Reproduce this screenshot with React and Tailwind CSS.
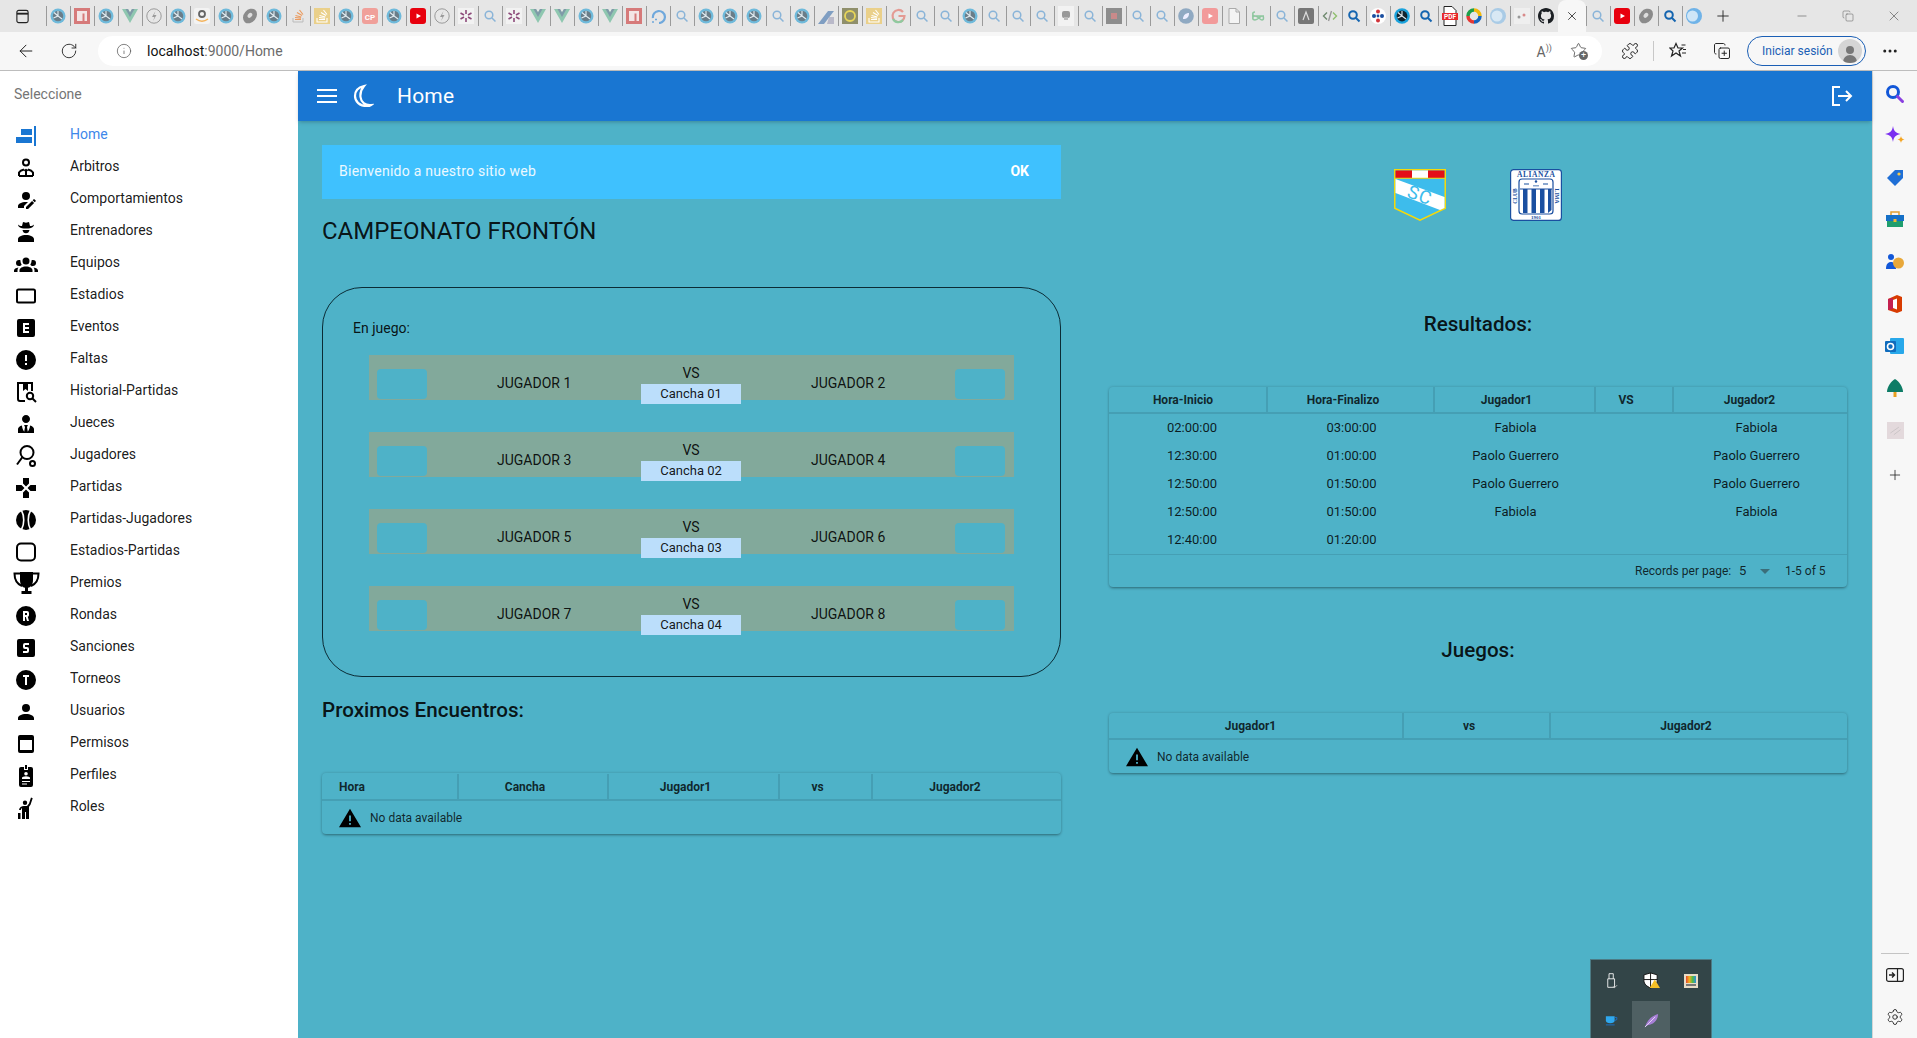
import React from "react";
import { ArrowLeft, RotateCw, Info, Plus, Minus, X, Copy, Settings, Puzzle, CopyPlus, Star, MoreHorizontal } from "lucide-react";

const P = ({ d, className = "" }) => (
  <svg viewBox="0 0 24 24" className={`w-6 h-6 ${className}`} fill="currentColor"><path fillRule="evenodd" d={d} /></svg>
);
const S = ({ children, className = "w-6 h-6" }) => (
  <svg viewBox="0 0 24 24" className={className} fill="none" stroke="currentColor" strokeWidth="2">{children}</svg>
);
const C = "M12,2A10,10 0 0,1 22,12A10,10 0 0,1 12,22A10,10 0 0,1 2,12A10,10 0 0,1 12,2Z";
const B = "M5,3H19A2,2 0 0,1 21,5V19A2,2 0 0,1 19,21H5A2,2 0 0,1 3,19V5A2,2 0 0,1 5,3Z";

const navItems = [
  ["Home", <P className="text-[#1976d2]" d="M20 2H22V22H20V2ZM7 5H18V11H7V5ZM2 13H18V19H2V13Z" />],
  ["Arbitros", <S><circle cx="12" cy="6.500" r="3" /><path d="M10.500 13.500 12 15l1.500-1.500M12 15v5M5 20v-3.500c1-1.500 3-2.500 5-3M19 20v-3.500c-1-1.500-3-2.500-5-3M5 20h14" /></S>],
  ["Comportamientos", <P d="M21.7,13.35L20.7,14.35L18.65,12.3L19.65,11.3C19.86,11.09 20.21,11.09 20.42,11.3L21.7,12.58C21.91,12.79 21.91,13.14 21.7,13.35M12,18.94L18.06,12.88L20.11,14.93L14.06,21H12V18.94M12,14C7.58,14 4,15.79 4,18V20H10V18.11L14,14.11C13.34,14.03 12.67,14 12,14M12,4A4,4 0 0,0 8,8A4,4 0 0,0 12,12A4,4 0 0,0 16,8A4,4 0 0,0 12,4Z" />],
  ["Entrenadores", <P d="M9 2l3 .8L15 2l1 4c1.500 0 3-.5 4-1.500 0 2-2 3.500-4 3.700-1 .2-2.500 .3-4 .3s-3-.1-4-.3C6 8 4 6.500 4 4.500 5 5.500 6.500 6 8 6L9 2ZM8.500 10h7c-.3 2-1.600 3.300-3.500 3.300S8.800 12 8.500 10ZM12 15c4.400 0 8 1.800 8 4v3H4v-3c0-2.200 3.600-4 8-4Z" />],
  ["Equipos", <P d="M12,5.5A3.5,3.5 0 0,1 15.5,9A3.5,3.5 0 0,1 12,12.5A3.5,3.5 0 0,1 8.5,9A3.5,3.5 0 0,1 12,5.5M5,8C5.56,8 6.08,8.15 6.53,8.42C6.38,9.85 6.8,11.27 7.66,12.38C7.16,13.34 6.16,14 5,14A3,3 0 0,1 2,11A3,3 0 0,1 5,8M19,8A3,3 0 0,1 22,11A3,3 0 0,1 19,14C17.84,14 16.84,13.34 16.34,12.38C17.2,11.27 17.62,9.85 17.47,8.42C17.92,8.15 18.44,8 19,8M5.5,18.25C5.5,16.18 8.41,14.5 12,14.5C15.59,14.5 18.5,16.18 18.5,18.25V20H5.5V18.25M0,20V18.5C0,17.11 1.89,15.94 4.45,15.6C3.86,16.28 3.5,17.22 3.5,18.25V20H0M24,20H20.5V18.25C20.5,17.22 20.14,16.28 19.55,15.6C22.11,15.94 24,17.11 24,18.5V20Z" />],
  ["Estadios", <S><rect x="3" y="5.500" width="18" height="13" rx="1.500" /></S>],
  ["Eventos", <P d={"M9,7V17H15V15H11V13H15V11H11V9H15V7H9Z" + B} />],
  ["Faltas", <P d={"M13,13H11V7H13V13ZM13,17H11V15H13V17Z" + C} />],
  ["Historial-Partidas", <S><path d="M11 21H6a2 2 0 0 1-2-2V3h14v8" /><path d="M9 3v8l2.500-2 2.500 2V3" fill="currentColor" stroke="none" /><circle cx="16" cy="16" r="3.200" /><path d="M18.500 18.500 22 22" /></S>],
  ["Jueces", <P d="M12 3C14.21 3 16 4.79 16 7S14.21 11 12 11 8 9.21 8 7 9.79 3 12 3M16 13.54C16 14.6 15.72 17.07 13.81 19.83L13 15L13.94 13.12C13.32 13.05 12.67 13 12 13S10.68 13.05 10.06 13.12L11 15L10.19 19.83C8.28 17.07 8 14.6 8 13.54C5.61 14.24 4 15.5 4 17V21H20V17C20 15.5 18.4 14.24 16 13.54Z" />],
  ["Jugadores", <S><ellipse cx="13" cy="8.500" rx="6.500" ry="6.500" /><path d="M8.500 13 3 20.500" /><circle cx="18.500" cy="19.500" r="2.500" /></S>],
  ["Partidas", <P d="M16.5,9L13.5,12L16.5,15H22V9H16.5ZM9,16.5V22H15V16.5L12,13.5L9,16.5ZM7.5,9H2V15H7.5L10.5,12L7.5,9ZM15,7.5V2H9V7.5L12,10.5L15,7.5Z" />],
  ["Partidas-Jugadores", <svg viewBox="0 0 24 24" className="w-6 h-6"><circle cx="12" cy="12" r="10" fill="currentColor" /><path d="M7.500 2.500c3 5.500 3 13.500 0 19M16.500 2.500c-3 5.500-3 13.500 0 19" fill="none" stroke="#fff" strokeWidth="1.600" /></svg>],
  ["Estadios-Partidas", <S><rect x="3" y="3.500" width="18" height="17" rx="4" /></S>],
  ["Premios", <svg viewBox="0 0 27 26" className="w-[27px] h-[26px] overflow-visible" fill="currentColor"><path d="M7 1h13v8c0 5-2.500 8-6.500 8S7 14 7 9ZM12 16h3v4h-3ZM8.500 20h10v3h-10Z" /><path d="M7 2.500H1.500C1.500 9 4 13 9 15M20 2.500h5.500C25.500 9 23 13 18 15" fill="none" stroke="currentColor" strokeWidth="2" /></svg>],
  ["Rondas", <P d={"M9,7V17H11V13H11.8L13,17H15L13.76,12.85C14.5,12.55 15,11.84 15,11V9A2,2 0 0,0 13,7H9ZM11,9H13V11H11V9Z" + C} />],
  ["Sanciones", <P d={"M11,7A2,2 0 0,0 9,9V11A2,2 0 0,0 11,13H13V15H9V17H13A2,2 0 0,0 15,15V13A2,2 0 0,0 13,11H11V9H15V7H11Z" + B} />],
  ["Torneos", <P d={"M9,7V9H11V17H13V9H15V7H9Z" + C} />],
  ["Usuarios", <P d="M12,4A4,4 0 0,1 16,8A4,4 0 0,1 12,12A4,4 0 0,1 8,8A4,4 0 0,1 12,4M12,14C16.42,14 20,15.79 20,18V20H4V18C4,15.79 7.58,14 12,14Z" />],
  ["Permisos", <P d="M6 3H18A2 2 0 0 1 20 5V19A2 2 0 0 1 18 21H6A2 2 0 0 1 4 19V5A2 2 0 0 1 6 3ZM6 8V18H18V8H6Z" />],
  ["Perfiles", <P d="M11 1h2v4h-2V1ZM7 3h3v3h4V3h3a2 2 0 0 1 2 2v16a2 2 0 0 1-2 2H7a2 2 0 0 1-2-2V5a2 2 0 0 1 2-2ZM12 8a1.800 1.800 0 1 0 0 3.600A1.800 1.800 0 0 0 12 8ZM8 15h8v-1.200c0-.8-1.800-1.600-4-1.600s-4 .8-4 1.600V15ZM8 17v1h8v-1H8ZM8 19.500v1h5v-1H8Z" />],
  ["Roles", <P d="M11 4.500a2.200 2.200 0 1 1 0 4.400 2.200 2.200 0 0 1 0-4.400ZM17 1.500l1.700.8-2.200 6.500-1.500 2V23h-3v-7h-1v7H8V12c-.6.4-1 1-1.200 2H5c.3-2.600 2.500-4 5-4h3l2-2.500L17 1.500ZM4 17h2.500v6H4v-6Z" />],
];

function Fav({ k }) {
  const cls = "w-4 h-4";
  switch (k) {
    case "sw": return <svg viewBox="0 0 16 16" className={cls}><circle cx="8" cy="8" r="7.500" fill="#6fbadb" /><circle cx="8" cy="8" r="5.200" fill="#6a7d88" /><path d="M8 3v5l4 3M8 8l-4.500 2M8 8 4 4.500" stroke="#e4eef3" strokeWidth="1.100" fill="none" /></svg>;
    case "n": return <svg viewBox="0 0 16 16" className={cls}><rect width="16" height="16" fill="#d67a7a" /><path d="M3 13V3h10v10h-2.500V5.500h-2V13Z" fill="#f3e5e5" /></svg>;
    case "vue": return <svg viewBox="0 0 16 16" className={cls}><path d="M0 1h6l2 3.500L10 1h6L8 15Z" fill="#8fc7b0" /><path d="M3.500 1H6l2 3.500L10 1h2.500L8 9Z" fill="#7f9aa8" /></svg>;
    case "bolt": return <svg viewBox="0 0 16 16" className={cls} fill="none"><circle cx="8" cy="8" r="7.200" stroke="#9a9a9a" /><path d="M9.500 3 6 9h2.500L7 13l3.500-6H8Z" fill="#9a9a9a" /></svg>;
    case "amz": return <svg viewBox="0 0 16 16" className={cls}><rect width="16" height="16" rx="2" fill="#f3f3f3" /><circle cx="8" cy="6" r="3" fill="none" stroke="#666" strokeWidth="1.800" /><path d="M2 11c4 3 8 3 12 0" stroke="#f4b35a" strokeWidth="1.500" fill="none" /></svg>;
    case "disc": return <svg viewBox="0 0 16 16" className={cls}><ellipse cx="8" cy="8" rx="8" ry="6.200" transform="rotate(-50 8 8)" fill="#8b8b8b" /><ellipse cx="8.500" cy="7.500" rx="2.800" ry="2" transform="rotate(-50 8 8)" fill="#ddd" /></svg>;
    case "so1": return <svg viewBox="0 0 16 16" className={cls} fill="none"><path d="M3 10v4h10v-4" stroke="#bbb" /><path d="M5 11.500h6M5 9.500l6 .7M5.500 7.500l5.800 1.500M7 4.500l5 3M9.500 2l3.500 4.500" stroke="#eb9b5f" strokeWidth="1.200" /></svg>;
    case "so2": return <svg viewBox="0 0 16 16" className={cls}><rect width="16" height="16" fill="#ead08a" /><path d="M3 10v4h10v-4M5 11.500h6M5 9.500l6 .7M5.500 7.500l5.800 1.500M7 4.500l5 3M9.500 2l3.500 4.500" stroke="#fff" fill="none" strokeWidth="1.100" /></svg>;
    case "cp": return <svg viewBox="0 0 16 16" className={cls}><rect width="16" height="16" rx="3" fill="#f0a09a" /><text x="8" y="11.500" fontSize="8" fontWeight="700" textAnchor="middle" fill="#fff" fontFamily="Roboto, sans-serif">CP</text></svg>;
    case "yt": return <svg viewBox="0 0 16 16" className={cls}><rect width="16" height="16" rx="3" fill="#e8000d" /><path d="M6.500 5.500v5L11 8Z" fill="#fff" /></svg>;
    case "yt2": return <svg viewBox="0 0 16 16" className={cls}><rect width="16" height="16" rx="3" fill="#f29a9a" /><path d="M6.500 5.500v5L11 8Z" fill="#fff" /></svg>;
    case "ast": return <svg viewBox="0 0 16 16" className={cls}><rect width="16" height="16" fill="#f2f2f2" /><path d="M8 2v4M8 10v4M2.500 5l3.500 2M10 9l3.500 2M2.500 11 6 9M10 7l3.500-2" stroke="#8d4a7a" strokeWidth="1.600" /></svg>;
    case "s": return <svg viewBox="0 0 16 16" className={cls} fill="none"><circle cx="7" cy="7" r="3.800" stroke="#8ab4d8" strokeWidth="1.500" /><path d="m10 10 3.500 3.500" stroke="#8ab4d8" strokeWidth="1.500" /></svg>;
    case "sd": return <svg viewBox="0 0 16 16" className={cls} fill="none"><circle cx="7" cy="7" r="3.800" stroke="#1565b0" strokeWidth="2" /><path d="m10 10 3.500 3.500" stroke="#1565b0" strokeWidth="2" /></svg>;
    case "spin": return <svg viewBox="0 0 16 16" className={cls} fill="none"><path d="M3 10a6 6 0 1 1 6 5" stroke="#6fa8dc" strokeWidth="2.200" /><path d="M2 14h2M5 11.500h2" stroke="#6fa8dc" strokeWidth="1.500" /></svg>;
    case "diag": return <svg viewBox="0 0 16 16" className={cls}><path d="M0 16 10 3h6L6 16Z" fill="#7f9ec2" /><path d="M11 9h5v7h-7Z" fill="#b9b9c9" /></svg>;
    case "oli": return <svg viewBox="0 0 16 16" className={cls}><rect width="16" height="16" fill="#8f8f6b" /><circle cx="8" cy="8" r="5" fill="none" stroke="#e8d65a" strokeWidth="1.800" /></svg>;
    case "g": return <svg viewBox="0 0 16 16" className={cls} fill="none"><path d="M13 4a6 6 0 1 0 1.500 4H8.500" stroke="#e49a93" strokeWidth="2.200" /><path d="M3 11a6 6 0 0 0 10 1" stroke="#8fca9f" strokeWidth="2.200" /></svg>;
    case "skull": return <svg viewBox="0 0 16 20" className="w-4 h-5"><rect width="16" height="20" fill="#f2f2f2" /><rect x="4" y="5" width="8" height="7" rx="2" fill="#999" /><rect x="6" y="11" width="4" height="3" fill="#bbb" /></svg>;
    case "dk": return <svg viewBox="0 0 16 16" className={cls}><rect width="16" height="16" fill="#8d8d8d" /><rect x="5" y="5" width="6" height="6" fill="#c98a8a" /></svg>;
    case "leaf": return <svg viewBox="0 0 16 16" className={cls}><circle cx="8" cy="8" r="7.800" fill="#8fa9c2" /><path d="M5 11c0-4 3-6 6-6 0 4-2 6-6 6Z" fill="#eef" /></svg>;
    case "doc": return <svg viewBox="0 0 16 16" className={cls} fill="none"><path d="M3 .5h7l3.500 3.500v11.500H3Z" stroke="#aaa" fill="#f4f4f4" /><path d="M10 .5V4h3.500" stroke="#aaa" /></svg>;
    case "gg": return <svg viewBox="0 0 16 16" className={cls} fill="none" stroke="#8fc79f" strokeWidth="1.500"><path d="M2 8h12M5 4c-3 0-3 4 0 4s5 4 7 4 2-4 0-4-4 4-7 4-3-4 0-4" /></svg>;
    case "a": return <svg viewBox="0 0 16 16" className={cls}><rect width="16" height="16" rx="2" fill="#777" /><path d="M5 12 8 4l3 8" stroke="#ddd" strokeWidth="1.200" fill="none" /></svg>;
    case "code": return <svg viewBox="0 0 16 16" className={cls} fill="none" strokeWidth="1.400"><path d="M5 4.500 1.500 8 5 11.500" stroke="#6f8a6f" /><path d="M11 4.500 14.500 8 11 11.500" stroke="#8fbf6f" /><path d="M9.500 3 6.500 13" stroke="#999" /></svg>;
    case "dots": return <svg viewBox="0 0 16 16" className={cls}><circle cx="8" cy="8" r="8" fill="#fff" /><circle cx="8" cy="3.500" r="2" fill="#d0343a" /><circle cx="4" cy="8" r="2" fill="#1a4fa0" /><circle cx="12" cy="8" r="2" fill="#1a4fa0" /><circle cx="8" cy="12.500" r="2" fill="#d0343a" /><circle cx="8" cy="8" r="1.400" fill="#1a4fa0" /></svg>;
    case "swd": return <svg viewBox="0 0 16 16" className={cls}><circle cx="8" cy="8" r="7.800" fill="#1aa3dd" /><circle cx="8" cy="8" r="5.400" fill="#10242f" /><path d="M8 3v5l4 3M8 8l-4.500 2M8 8 4 4.500" stroke="#e4eef3" strokeWidth="1.100" fill="none" /></svg>;
    case "pdf": return <svg viewBox="0 0 16 20" className="w-4 h-5"><path d="M2 .5h8l4 4v15H2Z" fill="#fff" stroke="#222" /><rect y="7" width="16" height="7" fill="#e8282b" /><text x="8" y="13" fontSize="6.500" fontWeight="700" textAnchor="middle" fill="#fff" fontFamily="Roboto, sans-serif">PDF</text></svg>;
    case "col": return <svg viewBox="0 0 16 16" className={cls} fill="none" strokeWidth="3.500"><path d="M2 8a6 6 0 0 1 6-6" stroke="#1e9e4a" /><path d="M8 2a6 6 0 0 1 6 6" stroke="#f2b90d" /><path d="M14 8a6 6 0 0 1-6 6" stroke="#1565c0" /><path d="M8 14a6 6 0 0 1-6-6" stroke="#e53935" /></svg>;
    case "pb": return <svg viewBox="0 0 16 16" className={cls}><circle cx="8" cy="8" r="8" fill="#a9cbe6" /><circle cx="7" cy="8" r="5.500" fill="#d8e8f4" /></svg>;
    case "b2": return <svg viewBox="0 0 16 16" className={cls}><circle cx="8" cy="8" r="8" fill="#6fb3e8" /><circle cx="6.500" cy="8" r="5.500" fill="#cfe6f7" /></svg>;
    case "gd": return <svg viewBox="0 0 16 16" className={cls}><rect width="16" height="16" fill="#efefef" /><circle cx="5" cy="9" r="1.500" fill="#999" /><circle cx="10" cy="7" r="1.500" fill="#d98a8a" /></svg>;
    case "gh": return <svg viewBox="0 0 16 16" className={cls}><path fillRule="evenodd" fill="#1b1f23" d="M8 0C3.580 0 0 3.580 0 8c0 3.540 2.290 6.530 5.470 7.590.4.070.55-.17.55-.38 0-.19-.01-.82-.01-1.490-2.010.37-2.530-.49-2.690-.94-.09-.23-.48-.94-.82-1.130-.28-.15-.68-.52-.01-.53.63-.01 1.080.58 1.230.82.72 1.210 1.870.87 2.330.66.070-.52.28-.87.51-1.070-1.780-.2-3.640-.89-3.640-3.950 0-.87.310-1.590.82-2.150-.08-.2-.36-1.020.08-2.120 0 0 .67-.21 2.200.82.64-.18 1.320-.27 2-.27s1.360.09 2 .27c1.530-1.040 2.200-.82 2.200-.82.44 1.100.16 1.920.08 2.120.51.56.82 1.270.82 2.150 0 3.070-1.870 3.750-3.650 3.950.29.25.54.73.54 1.480 0 1.070-.01 1.930-.01 2.200 0 .21.15.46.55.38A8.010 8.010 0 0 0 16 8c0-4.420-3.580-8-8-8Z" /></svg>;
    default: return null;
  }
}

const tabsA = ["sw","n","sw","vue","bolt","sw","amz","sw","disc","sw","so1","so2","sw","cp","sw","yt","bolt","ast","s","ast","vue","vue","sw","vue","n","spin","s","sw","sw","sw","s","sw","diag","oli","so2","g","s","s","sw","s","s","s","skull","s","dk","s","s","leaf","yt2","doc","gg","s","a","code","sd","dots","swd","sd","pdf","col","pb","gd","gh"];
const tabsB = ["s","yt","disc","sd","b2"];

function Tab({ k }) {
  return (
    <div className="relative w-6 h-full flex items-center justify-center shrink-0 before:content-[''] before:absolute before:left-0 before:top-[6px] before:h-5 before:w-px before:bg-[#9a9a9a]">
      <Fav k={k} />
    </div>
  );
}

function TabStrip() {
  return (
    <div className="h-8 bg-[#e6e6e6] flex items-stretch shrink-0">
      <div className="w-[46px] flex items-center pl-[15px] shrink-0">
        <svg viewBox="0 0 16 16" className="w-[15px] h-[17px]" fill="none" stroke="#222" strokeWidth="1.200"><rect x="2" y="1.500" width="12" height="13" rx="2" /><path d="M2 5h12" strokeWidth="2" /></svg>
      </div>
      {tabsA.map((k, i) => <Tab key={i} k={k} />)}
      <div className="w-[28px] h-full bg-[#f7f7f7] rounded-t-lg flex items-center justify-center shrink-0"><X size={14} strokeWidth={1.500} className="text-[#333]" /></div>
      {tabsB.map((k, i) => <Tab key={i} k={k} />)}
      <div className="w-[34px] flex items-center justify-center shrink-0"><Plus size={18} strokeWidth={1.200} className="text-[#222]" /></div>
      <div className="ml-auto flex items-center text-[#555]">
        <div className="w-[47px] flex justify-center"><Minus size={14} strokeWidth={1} /></div>
        <div className="w-[46px] flex justify-center"><Copy size={12} strokeWidth={1} /></div>
        <div className="w-[46px] flex justify-center"><X size={16} strokeWidth={1} /></div>
      </div>
    </div>
  );
}

function Toolbar() {
  return (
    <div className="h-[39px] bg-[#f7f7f7] border-b border-[#bdbdbd] flex items-center shrink-0 text-[#222]">
      <div className="w-[98px] flex items-center shrink-0 pl-[16px] gap-[24px]">
        <ArrowLeft size={20} strokeWidth={1.200} />
        <RotateCw size={18} strokeWidth={1.200} />
      </div>
      <div className="w-[1504px] h-[30px] bg-white rounded-[15px] flex items-center pl-[18px] shrink-0">
        <Info size={16} strokeWidth={1.100} className="text-[#555]" />
        <span className="ml-[15px] text-[14px] text-[#111]">localhost<span className="text-[#6b6b6b]">:9000/Home</span></span>
        <div className="ml-auto flex items-center gap-[18px] pr-[14px] text-[#666]">
          <span className="text-[14px] leading-none">A<span className="text-[9px] align-super">))</span></span>
          <div className="relative w-[18px] h-[18px]">
            <Star size={17} strokeWidth={1.100} className="text-[#444]" />
            <div className="absolute right-0 bottom-0 w-[9px] h-[9px] rounded-full bg-[#666] text-white text-[9px] leading-[8px] text-center">+</div>
          </div>
        </div>
      </div>
      <div className="ml-[19px] flex items-center shrink-0">
        <Puzzle size={18} strokeWidth={1.300} />
        <div className="ml-[14px] w-px h-5 bg-[#c8c8c8]" />
        <svg viewBox="0 0 18 18" className="w-[18px] h-[18px] ml-[15px]" fill="none" stroke="currentColor" strokeWidth="1.200"><path d="M7 1.500 9 6h4.500L10 9l1.500 5L7 11l-4.500 3L4 9 .8 6H5Z" /><path d="M12.500 3h4M14 7.500h3M13 11h4" /></svg>
        <CopyPlus size={18} strokeWidth={1.300} className="ml-[26px]" />
        <div className="ml-[16px] w-[119px] h-[30px] rounded-[15px] border border-[#1b5fb5] flex items-center pl-[14px] pr-[3px] justify-between">
          <span className="text-[12px] text-[#1b5fb5]">Iniciar sesión</span>
          <div className="w-6 h-6 rounded-full bg-[#d5d5d5] flex flex-col items-center justify-end overflow-hidden">
            <div className="w-2 h-2 rounded-full bg-[#777] mb-[1px]" />
            <div className="w-[14px] h-2 rounded-t-full bg-[#777]" />
          </div>
        </div>
        <MoreHorizontal size={18} className="ml-[15px]" />
      </div>
    </div>
  );
}

function Sidebar() {
  return (
    <aside className="w-[298px] bg-white pt-[13px] pl-[14px] shrink-0 overflow-hidden">
      <div className="h-5 leading-5 text-[14px] text-[#757575] mb-[14px]">Seleccione</div>
      {navItems.map(([label, icon], i) => (
        <div key={label} className="h-8 flex items-center gap-8">
          <div className="w-6 h-6 mt-1 flex items-center justify-center shrink-0 text-black">{icon}</div>
          <span className={`text-[14px] ${i === 0 ? "text-[#3d87ea]" : "text-black/90"}`}>{label}</span>
        </div>
      ))}
    </aside>
  );
}

function AppBar() {
  return (
    <header className="h-[50px] bg-[#1976d2] text-white flex items-center pl-[19px] pr-[19px] shrink-0 shadow-[0_2px_4px_-1px_rgba(0,0,0,0.25)] relative">
      <svg viewBox="0 0 20 14" className="w-5 h-[14px]" fill="currentColor"><path d="M0 0h20v2H0zM0 6h20v2H0zM0 12h20v2H0z" /></svg>
      <svg viewBox="0 0 24 24" className="w-[24px] h-[24px] ml-[13px]" fill="none" stroke="currentColor" strokeWidth="2.200"><path d="M14 2C7.500 3.500 5 8 5 12c0 5.500 4.500 10 12 10 1.500 0 3-.3 4-1-6 .5-10-3-10.500-8C10 8.500 11.500 5 14 2Z" /></svg>
      <h1 className="ml-[23px] mt-[1px] text-[21px] font-normal tracking-[0.2px]">Home</h1>
      <svg viewBox="0 0 24 24" className="ml-auto w-6 h-6" fill="none" stroke="currentColor" strokeWidth="2"><path d="M11 3H4v18h7M9 12h13M17 7l5 5-5 5" /></svg>
    </header>
  );
}

function Match({ a, b, c }) {
  const Box = () => <div className="w-[50px] h-[30px] mt-[14px] rounded-[4px] bg-[#4eb2c8] shrink-0" />;
  return (
    <div className="w-[645px] h-[45px] bg-[#82a99b] flex pl-2 mb-8 text-[14px] text-black/90">
      <Box />
      <div className="ml-[70px] w-[144px] mt-[18px] leading-5">{a}</div>
      <div className="w-[100px] shrink-0 flex flex-col items-center pt-2">
        <div className="h-[21px] leading-[21px]">VS</div>
        <div className="w-[100px] h-5 bg-[#bbdefb] text-[13px] leading-5 text-center">{c}</div>
      </div>
      <div className="ml-[70px] w-[144px] mt-[18px] leading-5">{b}</div>
      <Box />
    </div>
  );
}

function Warn() {
  return <svg viewBox="0 0 24 24" className="w-[22px] h-5 shrink-0" preserveAspectRatio="none" fill="black"><path fillRule="evenodd" d="M12 1 24 23H0ZM11 9v7h2V9ZM11 18v2h2v-2Z" /></svg>;
}

function DataTable({ cols, headers, children, className = "", hh = "h-[27px]" }) {
  return (
    <div className={`rounded-[4px] shadow-[0_2px_3px_-1px_rgba(0,0,0,0.35),0_0_3px_rgba(0,0,0,0.2)] ${className}`}>
      <div className={`grid ${cols} ${hh} border-b-2 border-[#459fb4]`}>
        {headers.map(([t, cls], i) => (
          <div key={i} className={`flex items-center text-[12px] font-bold text-black/80 ${i < headers.length - 1 ? "border-r-2 border-[#459fb4]" : ""} ${cls}`}>{t}</div>
        ))}
      </div>
      {children}
    </div>
  );
}

function NoData({ h }) {
  return (
    <div className={`${h} flex items-center pl-[17px] gap-[9px] text-[12px] text-black/80`}>
      <Warn />
      <span>No data available</span>
    </div>
  );
}

const results = [
  ["02:00:00", "03:00:00", "Fabiola", "Fabiola"],
  ["12:30:00", "01:00:00", "Paolo Guerrero", "Paolo Guerrero"],
  ["12:50:00", "01:50:00", "Paolo Guerrero", "Paolo Guerrero"],
  ["12:50:00", "01:50:00", "Fabiola", "Fabiola"],
  ["12:40:00", "01:20:00", "", ""],
];
const rCols = "grid-cols-[159px_167px_161px_78px_173px]";

function Left() {
  return (
    <div className="flex flex-col">
      <div className="h-[54px] bg-[#3fc1fe] flex items-center justify-between pl-[17px] pr-[32px] pb-[1px] text-white text-[14px]">
        <span className="text-white/90 tracking-[0.25px]">Bienvenido a nuestro sitio web</span>
        <span className="font-bold">OK</span>
      </div>
      <h2 className="mt-4 h-8 leading-8 text-[24px] font-normal text-black/90">CAMPEONATO FRONTÓN</h2>
      <div className="mt-10 h-[390px] border border-[#0b2c36] rounded-[40px] pl-[30px] pt-[30px]">
        <div className="h-5 leading-5 text-[14px] text-black/90 mb-[17px]">En juego:</div>
        <div className="pl-4">
          <Match a="JUGADOR 1" b="JUGADOR 2" c="Cancha 01" />
          <Match a="JUGADOR 3" b="JUGADOR 4" c="Cancha 02" />
          <Match a="JUGADOR 5" b="JUGADOR 6" c="Cancha 03" />
          <Match a="JUGADOR 7" b="JUGADOR 8" c="Cancha 04" />
        </div>
      </div>
      <h3 className="mt-[19px] h-7 leading-7 text-[20.6px] font-medium text-black/90">Proximos Encuentros:</h3>
      <DataTable
        className="mt-[49px]"
        hh="h-[28px] pt-px"
        cols="grid-cols-[137px_150px_171px_93px_188px]"
        headers={[["Hora", "pl-[17px]"], ["Cancha", "justify-center pr-[16px]"], ["Jugador1", "justify-center pr-[16px]"], ["vs", "justify-center pr-[16px]"], ["Jugador2", "justify-center pr-[24px]"]]}
      >
        <NoData h="h-[33px]" />
      </DataTable>
    </div>
  );
}

function Logos() {
  return (
    <div className="flex justify-center gap-16 h-[52px]">
      <svg viewBox="0 0 52 52" className="w-[52px] h-[52px]">
        <path d="M.75.75h50.500v38.500L26 51.200.75 39.250Z" fill="#3dbcec" stroke="#f5d90a" strokeWidth="1.500" />
        <path d="M1.500 1.500h16.500v7.500H1.500ZM34 1.500h16.500v7.500H34Z" fill="#e30f18" />
        <path d="M18 1.500h16v7.500H18Z" fill="#fff" />
        <path d="M1 9.250h50" stroke="#f5d90a" strokeWidth="1" />
        <path d="M1.500 10 50.500 28v11L46 41 1.500 24Z" fill="#fff" />
        <text x="26" y="32.500" fontSize="18.500" letterSpacing="1" textAnchor="middle" fill="#3dbcec" fontFamily="Roboto, sans-serif" transform="rotate(20 26 26)">SC</text>
      </svg>
      <svg viewBox="0 0 52 52" className="w-[52px] h-[52px]">
        <rect x=".6" y=".6" width="50.800" height="50.800" rx="3" fill="#fff" stroke="#1a4fa0" strokeWidth="1.200" />
        <text x="26" y="8" fontSize="7.500" textAnchor="middle" fill="#1a4fa0" fontFamily="Liberation Serif, serif" fontWeight="700" textLength="38">ALIANZA</text>
        <rect x="9" y="10" width="34" height="35" rx="3" fill="#fff" stroke="#1a4fa0" strokeWidth="1.200" />
        <path d="M10 20h32" stroke="#1a4fa0" />
        <circle cx="26" cy="12.500" r="1.200" fill="#1a4fa0" />
        <path d="M14 14h5v2h-5ZM33 14h5v2h-5ZM23 16h6v1.500h-6Z" fill="#8aa7cf" />
        <path d="M13 20h4.500v24H13ZM21.500 20H26v24h-4.500ZM30 20h4.500v24H30ZM38 20h3.500v21l-3.500 3Z" fill="#1a4fa0" />
        <text x="26" y="50" fontSize="5" textAnchor="middle" fill="#1a4fa0" fontFamily="Liberation Serif, serif" fontWeight="700">1901</text>
        <text x="-27" y="7" fontSize="5.500" textAnchor="middle" fill="#1a4fa0" fontFamily="Liberation Serif, serif" fontWeight="700" transform="rotate(-90)">CLUB</text>
        <text x="27" y="-45" fontSize="5.500" textAnchor="middle" fill="#1a4fa0" fontFamily="Liberation Serif, serif" fontWeight="700" transform="rotate(90)">LIMA</text>
      </svg>
    </div>
  );
}

function Right() {
  return (
    <div className="flex flex-col pt-6 pr-px">
      <Logos />
      <h3 className="mt-[89px] h-7 leading-7 text-[20.6px] font-medium text-black/90 text-center">Resultados:</h3>
      <DataTable
        className="mt-[49px] h-[200px] flex flex-col"
        cols={rCols}
        headers={[["Hora-Inicio", "justify-center pr-[9px]"], ["Hora-Finalizo", "justify-center pr-[15px]"], ["Jugador1", "justify-center pr-[16px]"], ["VS", "justify-center pr-[16px]"], ["Jugador2", "justify-center pr-[22px]"]]}
      >
        <div className="border-b border-[#459fb4] h-[141px]">
          {results.map((r, i) => (
            <div key={i} className={`grid ${rCols} h-7 items-center text-[13px] text-black/85 text-center`}>
              <div className="pl-[7px]">{r[0]}</div>
              <div>{r[1]}</div>
              <div>{r[2]}</div>
              <div />
              <div className="pr-2">{r[3]}</div>
            </div>
          ))}
        </div>
        <div className="flex-1 flex items-center pl-[526px] text-[12px] text-black/80">
          <span className="w-[104px]">Records per page:</span>
          <span className="text-[13px] w-[21px]">5</span>
          <svg viewBox="0 0 10 5" className="w-[10px] h-[5px]" fill="#3b6e7a"><path d="M0 0h10L5 5Z" /></svg>
          <span className="ml-[15px]">1-5 of 5</span>
        </div>
      </DataTable>
      <h3 className="mt-[49px] h-7 leading-7 text-[20.6px] font-medium text-black/90 text-center">Juegos:</h3>
      <DataTable
        className="mt-[49px]"
        cols="grid-cols-[295px_147px_296px]"
        headers={[["Jugador1", "justify-center pr-[10px]"], ["vs", "justify-center pr-[15px]"], ["Jugador2", "justify-center pr-[26px]"]]}
      >
        <NoData h="h-[33px]" />
      </DataTable>
    </div>
  );
}

function EdgeBar() {
  const icons = [
    <svg viewBox="0 0 20 20" className="w-5 h-5" fill="none"><circle cx="8" cy="8" r="5.500" stroke="#1257d8" strokeWidth="3" /><path d="m12.500 12.500 5 5" stroke="#8a3fe0" strokeWidth="3" strokeLinecap="round" /></svg>,
    <svg viewBox="0 0 20 20" className="w-5 h-5"><path d="M8 0c.8 5 2.500 7 7.500 8-5 1-6.700 3-7.500 8-.8-5-2.500-7-8-8C5.500 7 7.200 5 8 0Z" fill="#7a2ff0" /><path d="M16 10c.4 2 1 3 3.500 3.500-2.500.5-3.100 1.500-3.500 3.500-.4-2-1-3-3.500-3.500 2.500-.5 3.100-1.500 3.500-3.500Z" fill="#f5a623" /></svg>,
    <svg viewBox="0 0 20 20" className="w-5 h-5"><path d="M10 2h8v8l-8 8-8-8Z" fill="#1f6fd6" /><circle cx="14" cy="6" r="1.600" fill="#f7c948" /></svg>,
    <svg viewBox="0 0 20 20" className="w-5 h-5"><path d="M6 5V2h8v3" fill="none" stroke="#e0a030" strokeWidth="1.500" /><rect x="1" y="5" width="18" height="6" fill="#1570c7" /><rect x="2" y="11" width="16" height="6" fill="#1f9e6e" /><rect x="8.500" y="9" width="3" height="3" fill="#f5b82e" /></svg>,
    <svg viewBox="0 0 20 20" className="w-5 h-5"><circle cx="6" cy="5" r="3" fill="#1257d8" /><path d="M1 17c0-5 2-7 5-7s5 2 5 7Z" fill="#1257d8" /><circle cx="13.500" cy="11" r="5.500" fill="#e8a83a" /></svg>,
    <svg viewBox="0 0 20 20" className="w-5 h-5"><path d="M12 1 17 3v14l-5 2-9-3V5Z" fill="#d83b01" /><path d="M3 5l5-1v11l-5 1Z" fill="#c4204f" /><path d="M8 6l4-1.500v11L8 14Z" fill="#fff" /></svg>,
    <svg viewBox="0 0 20 20" className="w-5 h-5"><rect x="5" y="2" width="14" height="16" rx="1" fill="#28a8ea" /><rect width="11" height="11" y="5" rx="1" fill="#0f6cbd" /><circle cx="5.500" cy="10.500" r="3" fill="none" stroke="#fff" strokeWidth="1.600" /></svg>,
    <svg viewBox="0 0 20 20" className="w-5 h-5"><path d="M10 1c4 2 8 8 8 13H2C2 9 6 3 10 1Z" fill="#0e7c66" /><rect x="8.500" y="14" width="3" height="5" fill="#e8a020" /></svg>,
    <svg viewBox="0 0 20 20" className="w-[17px] h-[17px]"><rect width="20" height="20" fill="#e3d9dc" /><path d="M4 13 14 6M8 15l8-6" stroke="#aaa" strokeOpacity=".5" /></svg>,
    <Plus size={16} strokeWidth={1.200} className="text-[#222]" />,
  ];
  return (
    <aside className="w-[45px] bg-[#f7f7f7] border-l border-[#d5d5d5] shrink-0 flex flex-col items-center pt-[2px]">
      {icons.map((ic, i) => (
        <div key={i} className={`h-[42px] flex items-center justify-center ${i === 9 ? "mt-[3px]" : ""}`}>{ic}</div>
      ))}
      <div className="mt-auto w-7 h-px bg-[#c4c4c4] mb-[14px]" />
      <svg viewBox="0 0 18 14" className="w-[18px] h-[14px] mb-[26px]" fill="none" stroke="#222" strokeWidth="1.200"><rect x=".6" y=".6" width="16.800" height="12.800" rx="2" /><path d="M11.500 1v12" /><path d="M3 7h5M6 4.500 8.500 7 6 9.500" strokeWidth="1.400" /></svg>
      <Settings size={18} strokeWidth={1.200} className="text-[#222] mb-3" />
    </aside>
  );
}

function TrayPopup() {
  return (
    <div className="absolute left-[1590px] top-[959px] w-[122px] h-[79px] bg-[#334548] border border-[#4c7b85] border-b-0 grid grid-cols-[41px_38px_41px] grid-rows-[41px_38px]">
      <div className="flex items-center justify-center">
        <svg viewBox="0 0 16 20" className="w-[14px] h-[17px]" fill="none" stroke="#fff" strokeWidth="1"><path d="M3 8h8v10H3ZM4.500 8V2h5v6" /><path d="M9 17l2 1.500 3-3" stroke="#ccc" /></svg>
      </div>
      <div className="flex items-center justify-center">
        <svg viewBox="0 0 18 18" className="w-[17px] h-[17px]"><path d="M8 1 15 3v6c0 4-3 6-7 8-4-2-7-4-7-8V3Z" fill="#fff" stroke="#111" /><path d="M8 1v16M1 8h14" stroke="#111" /><path d="M12.500 8 18 17H7Z" fill="#f6c026" /></svg>
      </div>
      <div className="flex items-center justify-center">
        <div className="w-[14px] h-[14px] bg-[#e9dcc6] p-[2px] flex flex-col gap-[1px]">
          <div className="flex-1 bg-[linear-gradient(90deg,#e5482d,#f5b11f,#53b946,#2a8fe0)]" />
          <div className="h-[2px] bg-[#777]" />
        </div>
      </div>
      <div className="flex items-center justify-center">
        <svg viewBox="0 0 16 12" className="w-[14px] h-[11px]"><path d="M1 1h10v5c0 2-2 3-5 3S1 8 1 6Z" fill="#2fa8ee" /><path d="M11 2.500h2.500V5L11 6" fill="none" stroke="#1976d2" /><path d="M1 11h10" stroke="#1976d2" /></svg>
      </div>
      <div className="bg-[#4f6063] flex items-center justify-center">
        <svg viewBox="0 0 16 16" className="w-[15px] h-[15px]"><path d="M1 15C3 8 8 3 15 1c0 6-4 11-11 12Z" fill="#a77fd6" /><path d="M1 15 12 4" stroke="#e5d7f5" /></svg>
      </div>
    </div>
  );
}

export default function App() {
  return (
    <div className="relative h-[1038px] w-[1917px] overflow-hidden flex flex-col font-['Roboto',sans-serif] bg-[#4eb2c8]">
      <TabStrip />
      <Toolbar />
      <div className="flex flex-1 min-h-0">
        <Sidebar />
        <main className="flex-1 min-w-0 flex flex-col">
          <AppBar />
          <div className="grid grid-cols-2 gap-12 px-6 pt-6">
            <Left />
            <Right />
          </div>
        </main>
        <EdgeBar />
      </div>
      <TrayPopup />
    </div>
  );
}
